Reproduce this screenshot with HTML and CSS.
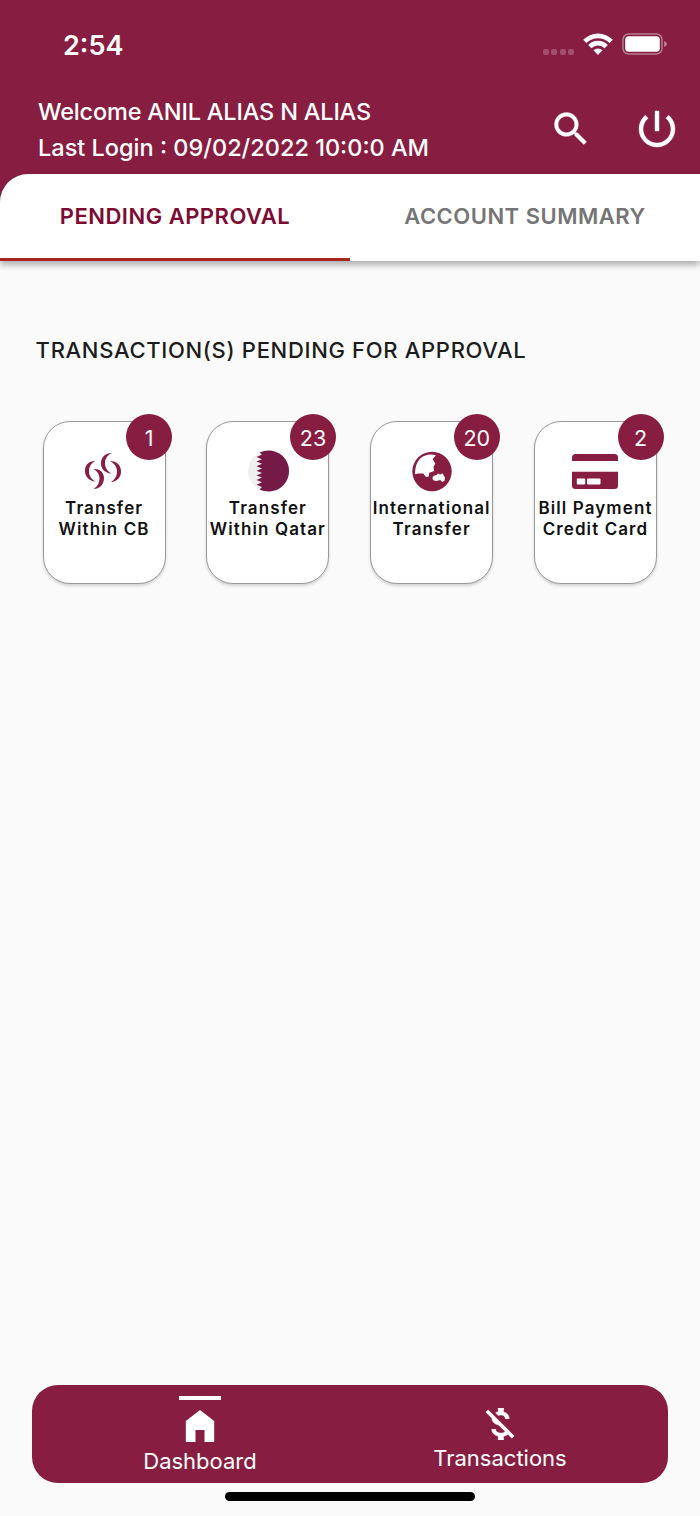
FILE: index.html
```html
<!DOCTYPE html>
<html lang="en">
  <head>
    <meta charset="UTF-8" />
    <meta name="viewport" content="width=device-width, initial-scale=1.0" />
    <title>Pending Approval</title>
    <link rel="stylesheet" href="styles.css">
  </head>
  <body>
    <div class="app">
      <header class="header">
        <!-- status bar -->
        <div class="status">
          <span class="time">2:54</span>
          <div class="statusIcons">
            <div class="signal"><i></i><i></i><i></i><i></i></div>
            <svg class="wifi" viewBox="0 0 30 22">
              <path d="M15 22l4.500-4.700a6.500 6.500 0 0 0-9 0z" />
              <path d="M5.200 11.900a13.800 13.800 0 0 1 19.600 0l-3.200 3.300a9.400 9.400 0 0 0-13.200 0z" />
              <path d="M.2 6.700a20.900 20.900 0 0 1 29.600 0l-3.200 3.300a16.400 16.400 0 0 0-23.200 0z" />
            </svg>
            <svg class="battery" viewBox="0 0 46 22">
              <rect x="1" y="1" width="39" height="20" rx="5.500" fill="none" stroke="#b87a90" stroke-width="1.500" />
              <rect x="3.200" y="3.200" width="34.600" height="15.600" rx="3.500" />
              <path d="M42 8q3 1 3 3t-3 3z" fill="#b87a90" />
            </svg>
          </div>
        </div>
        <!-- user info -->
        <div class="user">
          <div class="userText">
            <p class="welcome">Welcome ANIL ALIAS N ALIAS</p>
            <p class="lastLogin">Last Login : 09/02/2022 10:0:0 AM</p>
          </div>
          <svg class="searchIcon" viewBox="0 0 24 24">
            <path d="M15.500 14h-.79l-.28-.27C15.410 12.590 16 11.110 16 9.500 16 5.910 13.090 3 9.500 3S3 5.910 3 9.500 5.910 16 9.500 16c1.610 0 3.090-.59 4.230-1.570l.27.28v.79l5 4.990L20.490 19l-4.990-5zm-6 0C7.010 14 5 11.990 5 9.500S7.010 5 9.500 5 14 7.010 14 9.500 11.990 14 9.500 14z" />
          </svg>
          <svg class="powerIcon" viewBox="0 0 24 24">
            <path d="M13 3h-2v10h2V3zm4.830 2.170l-1.420 1.420C17.990 7.860 19 9.810 19 12c0 3.870-3.130 7-7 7s-7-3.130-7-7c0-2.190 1.010-4.140 2.580-5.420L6.170 5.170C4.230 6.820 3 9.260 3 12c0 4.970 4.030 9 9 9s9-4.030 9-9c0-2.740-1.230-5.180-3.170-6.830z" />
          </svg>
        </div>
      </header>

      <div class="tabsWrap">
        <nav class="tabs">
          <a class="tab active">PENDING APPROVAL</a>
          <a class="tab">ACCOUNT SUMMARY</a>
        </nav>
      </div>

      <main class="content">
        <h2 class="title">TRANSACTION(S) PENDING FOR APPROVAL</h2>
        <div class="cards">
          <div class="card">
            <span class="badge">1</span>
            <svg class="cardIcon" viewBox="0 0 48 42">
              <path d="M15.500 11C8 11 5 15.500 5 21c0 6 4.500 10 10.500 10.500C11 29 9 25.500 9 21c0-4.500 2.500-8 6.500-10z" />
              <path d="M13.500 19C20 18.500 24 22.500 24 28c0 6.500-4.500 11-10.500 11 4-2.500 6-6 6-10.500 0-4.500-2.500-7.500-6-9.500z" />
              <path d="M32 3C25 3 21 7.500 21 13.500c0 5.500 4 9.500 10.500 10C27 21 25 17.500 25 13c0-4.500 2.500-8 7-10z" />
              <path d="M30 11c7 0 11 4.500 11 10.500S37 31.500 31 32c4-2.500 6-6 6-10.500S34.500 13.500 30 11z" />
            </svg>
            <p class="cardName">Transfer<br>Within CB</p>
          </div>
          <div class="card">
            <span class="badge">23</span>
            <svg class="cardIcon" viewBox="0 0 48 42">
              <circle cx="24.500" cy="21" r="20.500" fill="#f0f0f0" />
              <path fill="#751a46" d="M15.500 2.600A20.500 20.500 0 1 1 15.500 39.400L18 37 12.500 34.800 18 32.200 12.500 30 18 27.600 12.500 25.400 18 23 12.500 20.800 18 18.400 12.500 16.200 18 13.800 12.500 11.600 18 9.200 12.500 7 18 4.600z" />
            </svg>
            <p class="cardName">Transfer<br>Within Qatar</p>
          </div>
          <div class="card">
            <span class="badge">20</span>
            <svg class="cardIcon" viewBox="0 0 48 42">
              <circle cx="24" cy="21.500" r="19.700" />
              <path fill="#fff" d="M7 24.300C7 14.500 10.500 8.500 16 6c4-1.700 8-1.700 12-.8L24.700 9l2.500 4.700L25.500 17l.7 4-4.900 1.700-.6 3.800-2.700.5-2.700-3.400-5.300-.2z" />
              <path fill="#fff" d="M24.300 28l1.500-2.300 2.900-.7 1.300-1.500 2.500 1 1.800-1.200 2.700 4.200-.5 3.200-2.300 1.200-2-2-4 1-3-.7z" />
            </svg>
            <p class="cardName">International<br>Transfer</p>
          </div>
          <div class="card">
            <span class="badge">2</span>
            <svg class="cardIcon" viewBox="0 0 48 42">
              <path d="M1 11V7.500Q1 4 4.500 4h39Q47 4 47 7.500V11z" />
              <path d="M1 21.800h46v14q0 3.200-3.500 3.200h-39Q1 39 1 35.800z" />
              <rect x="5.800" y="28.600" width="8.400" height="6" rx="1" fill="#fff" />
              <rect x="16" y="28.600" width="13.500" height="6" rx="1" fill="#fff" />
            </svg>
            <p class="cardName">Bill Payment<br>Credit Card</p>
          </div>
        </div>
      </main>

      <footer class="footer">
        <nav class="bottomNav">
          <a class="navItem current">
            <svg class="navIcon home" viewBox="0 0 30 32">
              <path d="M.8 11 15 0l14.200 11v21H19.500V20h-9v12H.8z" />
            </svg>
            <span>Dashboard</span>
          </a>
          <a class="navItem">
            <svg class="navIcon money" viewBox="3 3 18 18">
              <path d="M12.500 6.900c1.780 0 2.440.85 2.500 2.100h2.210c-.07-1.720-1.120-3.300-3.210-3.810V3h-3v2.160c-.53.12-1.030.3-1.480.54l1.470 1.470c.41-.17.91-.27 1.510-.27zM5.330 4.060L4.060 5.330 7.500 8.770c0 2.080 1.560 3.210 3.910 3.910l3.510 3.510c-.34.48-1.050.91-2.420.91-2.060 0-2.870-.92-2.980-2.100h-2.200c.12 2.190 1.760 3.420 3.680 3.830V21h3v-2.150c.96-.18 1.820-.55 2.450-1.120l2.220 2.220 1.270-1.270L5.330 4.060z" />
            </svg>
            <span>Transactions</span>
          </a>
        </nav>
        <div class="homeBar"></div>
      </footer>
    </div>
  </body>
</html>
```
FILE: styles.css
```css
* {
  margin: 0;
  padding: 0;
  box-sizing: border-box;
}
body {
  background: #fafafa;
  font-family: Inter, "Liberation Sans", sans-serif;
}
svg {
  display: block;
  flex: none;
  fill: #871e41;
}
.app {
  display: flex;
  flex-direction: column;
  width: 700px;
  height: 1516px;
}
/* header */
.header {
  height: 174px;
  background: #871e41;
  color: #fff;
}
.header svg {
  fill: #fff;
}
.status {
  display: flex;
  justify-content: space-between;
  height: 94px;
  padding: 28px 32px 0 63px;
}
.time {
  font-size: 27px;
  font-weight: 600;
  line-height: 35px;
}
.statusIcons {
  display: flex;
  height: 32px;
  align-items: center;
}
.signal {
  display: flex;
  gap: 2.500px;
  margin: 15px 9px 0 0;
}
.signal i {
  width: 6px;
  height: 6px;
  border-radius: 2px;
  background: #a34f6d;
}
.wifi {
  width: 30px;
  height: 22px;
  margin-right: 9px;
}
.battery {
  width: 46px;
  height: 22px;
}
.user {
  display: flex;
  padding-left: 38px;
}
.userText {
  width: 511px;
  font-size: 23.500px;
  font-weight: 500;
  line-height: 36px;
  white-space: nowrap;
}
.welcome {
  letter-spacing: -.18px;
}
.searchIcon {
  width: 44px;
  height: 44px;
  margin-top: 13px;
  stroke: #fff;
  stroke-width: .2;
}
.powerIcon {
  width: 48px;
  height: 48px;
  margin: 11px 0 0 40px;
  stroke: #fff;
  stroke-width: .2;
}
/* tabs */
.tabsWrap {
  background: linear-gradient(#871e41 50%, #fafafa 50%);
}
.tabs {
  display: flex;
  height: 87px;
  background: #fff;
  border-radius: 28px 0 0 0;
  box-shadow: 0 4px 6px rgba(0, 0, 0, .3);
  clip-path: inset(0 0 -20px 0);
}
.tab {
  flex: 1;
  padding-top: 24px;
  border-bottom: 3px solid transparent;
  color: #757575;
  font-size: 22px;
  font-weight: 600;
  line-height: 36px;
  letter-spacing: .5px;
  text-align: center;
  white-space: nowrap;
}
.tab.active {
  color: #7d0a33;
  border-color: #a9261f;
}
/* cards */
.content {
  flex: 1;
  padding: 71px 43px 0 42.600px;
}
.title {
  margin-left: -7px;
  color: #1c1c1c;
  font-size: 22px;
  font-weight: 500;
  line-height: 36px;
  letter-spacing: .68px;
  white-space: nowrap;
}
.cards {
  display: flex;
  justify-content: space-between;
  margin-top: 53px;
}
.card {
  position: relative;
  display: flex;
  flex-direction: column;
  align-items: center;
  width: 123px;
  height: 163px;
  padding-top: 28px;
  background: #fff;
  border: 1px solid #999;
  border-radius: 27px;
  box-shadow: 0 2px 3px rgba(0, 0, 0, .16);
}
.badge {
  position: absolute;
  top: -7.600px;
  right: -7.600px;
  width: 46px;
  height: 46px;
  border-radius: 50%;
  background: #871e41;
  color: #fff;
  font-size: 21.500px;
  line-height: 48px;
  text-align: center;
}
.cardIcon {
  width: 48px;
  height: 42px;
}
.cardName {
  margin-top: 5.600px;
  color: #111;
  font-size: 17px;
  font-weight: 600;
  line-height: 21.500px;
  letter-spacing: 1.100px;
  text-align: center;
  white-space: nowrap;
}
/* bottom */
.footer {
  padding: 0 32px 15px;
}
.bottomNav {
  display: flex;
  height: 98px;
  padding: 0 18px;
  border-radius: 26px;
  background: #871e41;
}
.bottomNav svg {
  fill: #fff;
}
.navItem {
  flex: 1;
  display: flex;
  flex-direction: column;
  align-items: center;
  padding-top: 23px;
  color: #fff;
  font-size: 22px;
  line-height: 28px;
}
.current::before {
  content: "";
  width: 42px;
  height: 4px;
  margin: -12px 0 10px;
  background: #fff;
}
.navIcon {
  height: 32px;
}
.home {
  width: 30px;
  margin-bottom: 5px;
}
.money {
  width: 32px;
  margin-bottom: 4px;
  stroke: #fff;
  stroke-width: .3;
}
.homeBar {
  width: 250px;
  height: 9px;
  margin: 9px auto 0;
  border-radius: 5px;
  background: #000;
}
```
